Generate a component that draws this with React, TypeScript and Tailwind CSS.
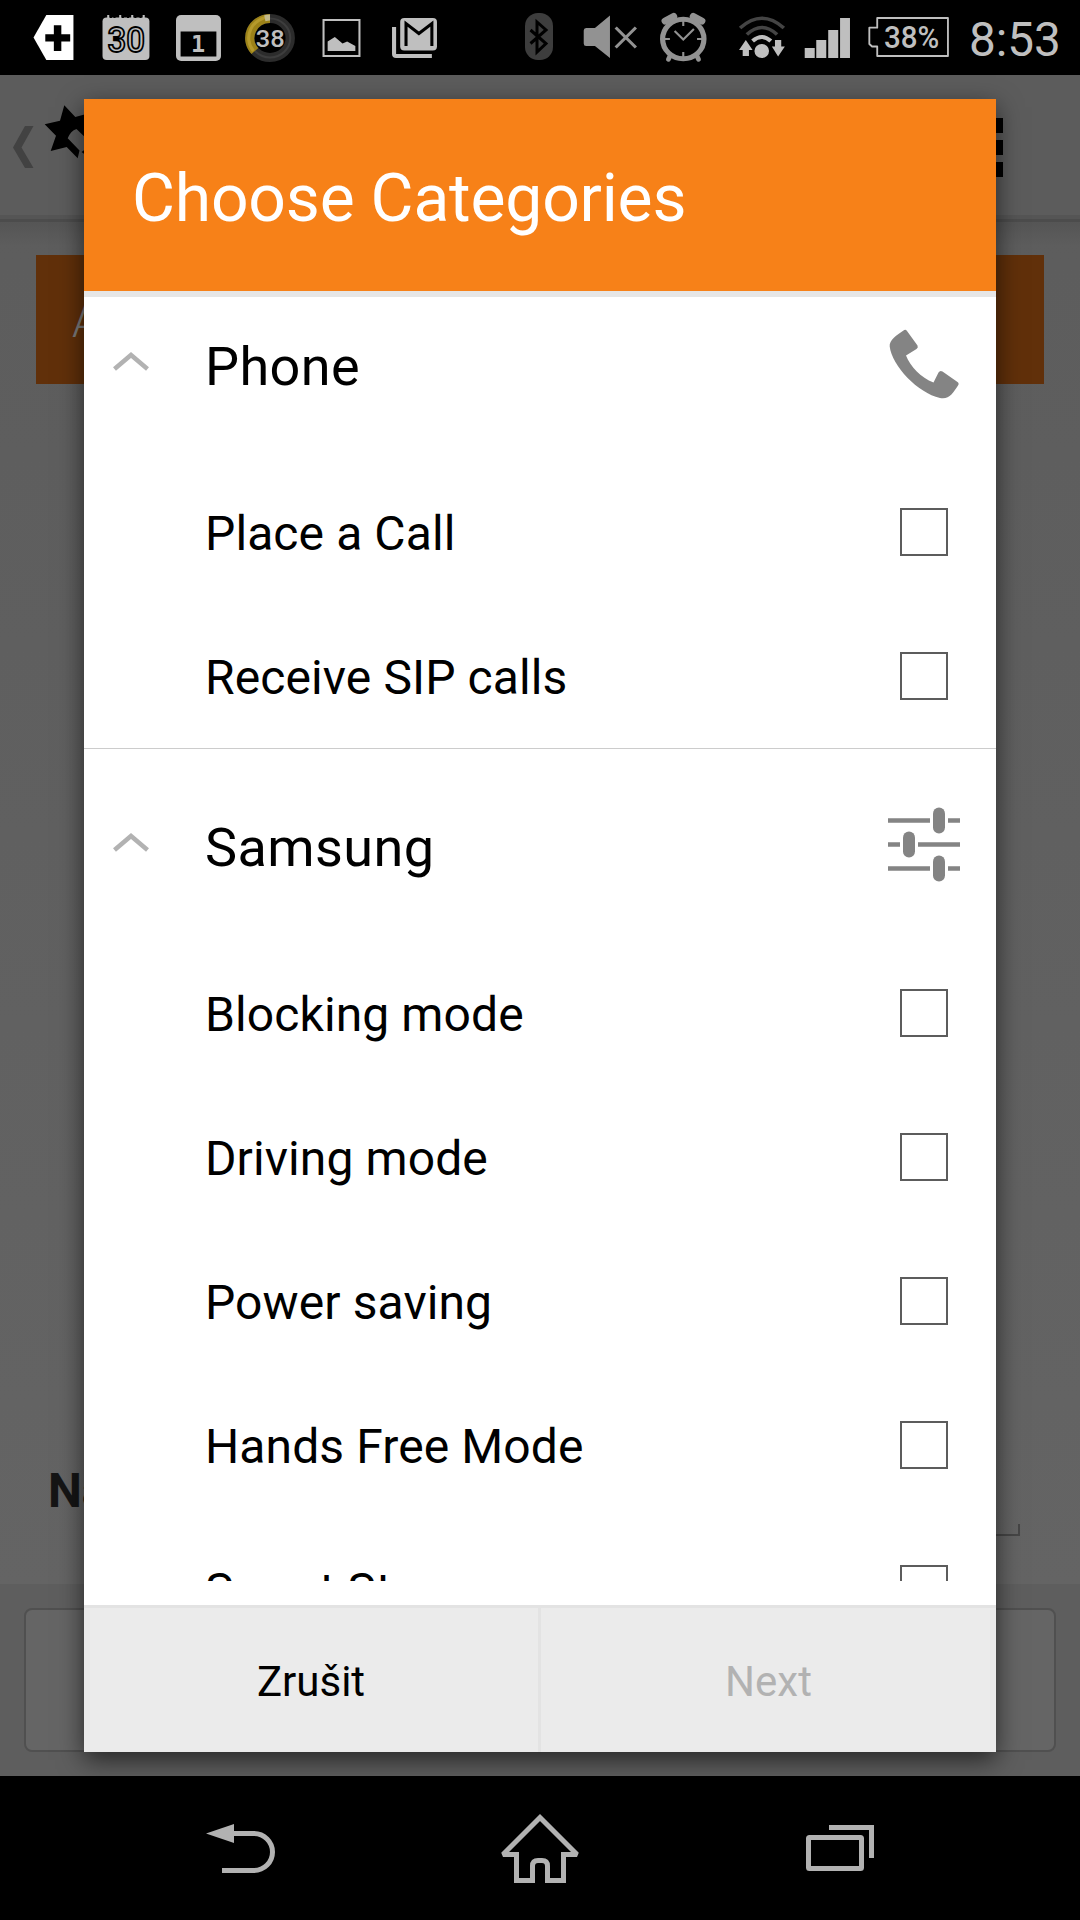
import { useState } from "react";

type Category = {
  title: string;
  icon: "phone" | "sliders";
  items: string[];
};

const categories: Category[] = [
  {
    title: "Phone",
    icon: "phone",
    items: ["Place a Call", "Receive SIP calls"],
  },
  {
    title: "Samsung",
    icon: "sliders",
    items: [
      "Blocking mode",
      "Driving mode",
      "Power saving",
      "Hands Free Mode",
      "Smart Stay",
    ],
  },
];

const StatusBar = () => (
  <div className="flex h-[75px] items-start bg-black">
    {/* notifications */}
    <svg className="ml-[33px] shrink-0" width="42" height="75" viewBox="32 0 41 75" preserveAspectRatio="none">
      <path d="M32.5 37.5L45 15H71.5V60H45Z" fill="#fff" />
      <path d="M44 37.8H68.3M56 25.3V51" stroke="#000" strokeWidth="7.3" />
    </svg>
    <svg className="ml-[27px] shrink-0" width="49" height="75" viewBox="99 0 47 75" preserveAspectRatio="none">
      <rect x="99.5" y="17.5" width="45" height="42.5" rx="4" fill="#bfbfbf" />
      <path
        d="M105 15V20M116.5 15V20M128 15V20M139 15V20"
        stroke="#bfbfbf"
        strokeWidth="2"
      />
      <path
        d="M107.5 14.5V18M111 14.5V18M119 14.5V18M124 14.5V18M131 14.5V18M136 14.5V18"
        stroke="#000"
        strokeWidth="2"
      />
      <text
        x="122.2"
        y="52"
        textAnchor="middle"
        textLength="36"
        lengthAdjust="spacingAndGlyphs"
        fontFamily="Roboto, sans-serif"
        fontSize="35"
        fontWeight="500"
        fill="#bfbfbf"
        stroke="#000"
        strokeWidth="1.8"
      >
        30
      </text>
    </svg>
    <svg className="ml-[25px] shrink-0" width="46" height="75" viewBox="170 0 45 75" preserveAspectRatio="none">
      <rect x="170" y="15" width="44" height="46" rx="5" fill="#bfbfbf" />
      <rect x="174.5" y="31.5" width="35" height="25" fill="#000" />
      <text
        x="191.5"
        y="52.5"
        textAnchor="middle"
        fontFamily="'DejaVu Sans Mono', monospace"
        fontSize="23"
        fontWeight="700"
        fill="#bfbfbf"
      >
        1
      </text>
    </svg>
    <svg className="ml-[21px] shrink-0" width="54" height="75" viewBox="235 0 52 75" preserveAspectRatio="none">
      <circle cx="261" cy="38" r="19.5" fill="none" stroke="#2c2c2c" strokeWidth="9" />
      <circle cx="261" cy="38" r="19.5" fill="none" stroke="#3d3d3d" strokeWidth="2" />
      <path d="M261 18.5A19.5 19.5 0 0 0 246.5 51" fill="none" stroke="#9c8218" strokeWidth="9" />
      <path d="M261 17A21 21 0 0 0 245 51" fill="none" stroke="#b59a2c" strokeWidth="3" />
      <path d="M256 18.2Q259 17.6 261 17.6" fill="none" stroke="#c2b98c" strokeWidth="6" />
      <text
        x="261.3"
        y="47.5"
        textAnchor="middle"
        fontFamily="Roboto, sans-serif"
        fontSize="24.5"
        fontWeight="500"
        fill="#bfbfbf"
      >
        38
      </text>
    </svg>
    <svg className="ml-[25px] shrink-0" width="39" height="75" viewBox="312 0 38 75" preserveAspectRatio="none">
      <rect x="313.5" y="20" width="35" height="36" fill="none" stroke="#bfbfbf" strokeWidth="2" />
      <path d="M317.5 51V41.5L324.5 37L332 43.5L336.5 41.5L344.5 46V51Z" fill="#bfbfbf" />
    </svg>
    <svg className="ml-[30px] shrink-0" width="47" height="75" viewBox="378 0 46 75" preserveAspectRatio="none">
      <rect x="387" y="18" width="36" height="32.5" rx="4" fill="#bfbfbf" />
      <path
        d="M392.7 46V23.5L405.3 33.5L418 23.5V46"
        fill="none"
        stroke="#000"
        strokeWidth="3"
      />
      <path d="M381 27V54Q381 56 383 56H418" fill="none" stroke="#bfbfbf" strokeWidth="4" />
    </svg>

    {/* system */}
    <svg className="ml-[84px] shrink-0" width="34" height="75" viewBox="522 0 34 75">
      <rect x="525" y="13" width="28" height="47" rx="13" fill="#3d3d3d" />
      <path
        d="M530.5 30L546 43.5L537 52V22L546 30L530.5 43.5"
        fill="none"
        stroke="#000"
        strokeWidth="3"
      />
    </svg>
    <svg className="ml-[27px] shrink-0" width="56" height="75" viewBox="582 0 54 75" preserveAspectRatio="none">
      <path d="M585 28H593.5L608 15.5V58L593.5 46H585Q582.7 46 582.7 43.5V30.5Q582.7 28 585 28Z" fill="#929292" />
      <path d="M613.5 27.5L633 47.5M633 27.5L613.5 47.5" stroke="#929292" strokeWidth="3" />
    </svg>
    <svg className="ml-[21px] shrink-0" width="48" height="75" viewBox="656 0 46 75" preserveAspectRatio="none">
      <g stroke="#929292" fill="none">
        <circle cx="678.3" cy="39" r="19.8" strokeWidth="5" />
        <path d="M661 21L669 16.5M696 21L688 16.5" strokeWidth="7" strokeLinecap="round" />
        <path d="M666 55L664 59.5M691 55L693 59.5" strokeWidth="4.5" strokeLinecap="round" />
        <path d="M670 31L678.3 39.5L688.5 29" strokeWidth="2" />
        <path
          d="M678.3 21V26M678.3 52V57M660 39H665.5M691.5 39H697"
          strokeWidth="2"
        />
      </g>
    </svg>
    <svg className="ml-[30px] shrink-0" width="50" height="75" viewBox="732 0 48 75" preserveAspectRatio="none">
      <path
        d="M734 28Q755 8.5 776 28M740.5 34.5Q755 20.5 769.5 34.5"
        fill="none"
        stroke="#444"
        strokeWidth="3.5"
      />
      <path d="M746 41Q755 33 763.5 41" fill="none" stroke="#bfbfbf" strokeWidth="4" />
      <circle cx="754.8" cy="51" r="7" fill="#bfbfbf" />
      <path d="M739.5 40L746 50H742.5V56H736.5V50H733Z" fill="#bfbfbf" />
      <path d="M770.5 56.5L777 46.5H773.5V40H767.5V46.5H764.5Z" fill="#bfbfbf" />
    </svg>
    <svg className="ml-4 shrink-0" width="47" height="75" viewBox="795 0 46 75" preserveAspectRatio="none">
      <path
        d="M795.7 48H805.5V58H795.7ZM807 40H816.8V58H807ZM818.7 30H828.5V58H818.7ZM830.3 18H840V58H830.3Z"
        fill="#bfbfbf"
      />
    </svg>
    <svg className="ml-[17px] shrink-0" width="82" height="75" viewBox="857 0 80 75" preserveAspectRatio="none">
      <path
        d="M866 18H935V56H866V46.5H861L858.3 44V27.7H866Z"
        fill="none"
        stroke="#bfbfbf"
        strokeWidth="1.8"
        strokeLinejoin="round"
      />
      <text
        x="872.5"
        y="48"
        textLength="54"
        lengthAdjust="spacingAndGlyphs"
        fontFamily="Roboto, sans-serif"
        fontSize="31"
        fontWeight="500"
        fill="#bfbfbf"
      >
        38%
      </text>
    </svg>
    <svg className="ml-[19px] shrink-0" width="95" height="75" viewBox="955 0 92 75" preserveAspectRatio="none">
      <text
        x="955"
        y="56"
        textLength="89"
        lengthAdjust="spacingAndGlyphs"
        fontFamily="Roboto, sans-serif"
        fontSize="48"
        fill="#bfbfbf"
      >
        8:53
      </text>
    </svg>
  </div>
);

// The form that stays dimmed behind the dialog
const DimmedScreen = () => (
  <div className="flex h-full flex-col bg-linear-to-b from-[#5c5c5c] to-[#656565]">
    <div className="flex h-[140px] shrink-0 items-start justify-between bg-[#5c5c5c] pr-[77px] pl-3">
      <div className="flex">
        <svg width="24" height="140" viewBox="12 75 24 140">
          <path d="M25 126H33.5L21.5 147.5L33.5 168H25L13 147.5Z" fill="#424242" />
        </svg>
        <svg className="ml-2" width="50" height="140" viewBox="44 75 50 140">
          <path
            d="M64.3 105.3L75.3 117L90 113V142L76.5 129Q70.5 131 67.7 138.3L79.5 150.5L77.7 158.3L66.7 147L50.7 151L56 135.7L44.7 124.3L60 120.7Z"
            fill="#000"
          />
          <path d="M81.5 152L90 146V158Z" fill="#000" />
        </svg>
      </div>
      <div className="flex flex-col gap-[7px] pt-[43px]">
        <span className="size-[15px] bg-black" />
        <span className="size-[15px] bg-black" />
        <span className="size-[15px] bg-black" />
      </div>
    </div>
    <div className="h-1 shrink-0 bg-[#555555]" />
    <div className="h-[3px] shrink-0 bg-[#4c4c4c]" />
    <div className="h-6 shrink-0 bg-linear-to-b from-[#555555] to-[#5d5d5d]" />

    <div className="mx-9 mt-[9px] flex h-[129px] shrink-0 items-center bg-[#61300a] pt-1 pl-9 font-light text-[#7c7c7c]">
      <span className="text-[44px]">A</span>
    </div>

    <div className="mx-12 mt-auto flex h-[120px] items-start justify-between">
      <span className="text-[48px] leading-[54px] font-bold text-[#151515]">
        Name
      </span>
      <div className="mt-[60px] mr-3 h-3 w-[600px] border-r-2 border-b-2 border-[#464646]" />
    </div>

    <div className="h-48 shrink-0 bg-[#5e5e5e] px-6 py-6">
      <div className="h-36 rounded-lg border-2 border-[#505050] bg-[#656565]" />
    </div>
  </div>
);

const Chevron = () => (
  <svg width="36" height="20" viewBox="0 0 36 20" className="mb-[5px] shrink-0">
    <path d="M1.5 17L18 3L34.5 17" fill="none" stroke="#b2b2b2" strokeWidth="4.5" />
  </svg>
);

const PhoneIcon = () => (
  <svg width="72" height="72" viewBox="0 0 72 72">
    <path
      d="M15.5 2.5Q17.5 0.8 19 3L29.5 17.5Q30.5 19.5 28.5 21L18 27.5C22 38 33 50 45.5 54.5L50.5 44.5Q52 42 54.5 43.5L69.5 54Q71.5 55.5 70 57.5C65 65 61 72 52 70C30 65 4 38 1.7 18.5C1 12 9 7 15.5 2.5Z"
      fill="#848484"
    />
  </svg>
);

const SlidersIcon = () => (
  <svg width="72" height="75" viewBox="0 0 72 75" className="mb-[2px]">
    <path
      d="M0 13.5H42M60 13.5H72M0 37.5H12M30 37.5H72M0 61.5H42M60 61.5H72"
      stroke="#848484"
      strokeWidth="4.5"
    />
    <rect x="45" y="0.5" width="12" height="26" rx="6" fill="#848484" />
    <rect x="15" y="24.5" width="12" height="26" rx="6" fill="#848484" />
    <rect x="45" y="48.5" width="12" height="26" rx="6" fill="#848484" />
  </svg>
);

const CategoryGroup = ({
  category,
  selected,
  onToggle,
}: {
  category: Category;
  selected: string[];
  onToggle: (item: string) => void;
}) => (
  <section>
    <div className="flex h-48 items-center pr-9 pl-[29px]">
      <Chevron />
      <h2 className="ml-14 flex-1 pt-1.5 text-[54px] leading-[64px] tracking-[0.4px]">
        {category.title}
      </h2>
      {category.icon === "phone" ? <PhoneIcon /> : <SlidersIcon />}
    </div>
    {category.items.map((item) => (
      <label
        key={item}
        className="flex h-36 items-center justify-between pr-12 pl-[121px]"
      >
        <span className="pt-[3px] text-[48px] leading-[56px] tracking-[0.1px]">
          {item}
        </span>
        <input
          type="checkbox"
          checked={selected.includes(item)}
          onChange={() => onToggle(item)}
          className="size-12 appearance-none border-2 border-[#5c5c5c] checked:bg-[#f78118]"
        />
      </label>
    ))}
  </section>
);

const CategoryDialog = () => {
  const [selected, setSelected] = useState<string[]>([]);

  const handleToggle = (item: string) => {
    setSelected((prev) =>
      prev.includes(item) ? prev.filter((i) => i !== item) : [...prev, item],
    );
  };

  return (
    <div
      role="dialog"
      className="absolute inset-x-[84px] top-6 flex h-[1653px] flex-col bg-white shadow-[0_8px_24px_rgba(0,0,0,0.6)]"
    >
      <h1 className="flex h-48 shrink-0 items-center bg-[#f78118] pt-1.5 pl-12 text-[66px] tracking-[-0.2px] text-white">
        Choose Categories
      </h1>
      <div className="h-1.5 shrink-0 bg-[#e6e6e6]" />

      <div className="mb-6 min-h-0 flex-1 overflow-hidden">
        <div className="-mt-[29px] divide-y divide-[#cccccc]">
          {categories.map((category) => (
            <CategoryGroup
              key={category.title}
              category={category}
              selected={selected}
              onToggle={handleToggle}
            />
          ))}
        </div>
      </div>

      <div className="flex h-[147px] shrink-0 border-t-3 border-[#e3e3e3] bg-[#ebebeb] text-[42px]">
        <button className="w-[457px] border-r-3 border-[#e3e3e3] pt-0.5">
          Zrušit
        </button>
        <button
          className="flex-1 pt-0.5 disabled:text-[#b2b2b2]"
          disabled={selected.length === 0}
        >
          Next
        </button>
      </div>
    </div>
  );
};

const NavigationBar = () => (
  <div className="flex h-36 items-start justify-center gap-[220px] bg-black">
    <svg width="80" height="144" viewBox="200 1776 80 144">
      <path d="M206 1833.5L234 1824V1843Z" fill="#b2b2b2" />
      <path
        d="M232 1833.5H254A18.5 18.5 0 0 1 254 1870.5H222"
        fill="none"
        stroke="#b2b2b2"
        strokeWidth="5"
      />
    </svg>
    <svg width="80" height="144" viewBox="500 1776 80 144">
      <path
        d="M540 1817.5L503 1854.5H516.5V1880.5H532.5V1866Q532.5 1860.5 538 1860.5H542Q547.5 1860.5 547.5 1866V1880.5H563.5V1854.5H577Z"
        fill="none"
        stroke="#b2b2b2"
        strokeWidth="5"
        strokeLinejoin="miter"
        strokeMiterlimit="2"
      />
    </svg>
    <svg width="80" height="144" viewBox="800 1776 80 144">
      <rect x="808.5" y="1837.5" width="53" height="31" rx="1" fill="none" stroke="#b2b2b2" strokeWidth="5" />
      <path d="M829 1827.5H871.5V1858" fill="none" stroke="#b2b2b2" strokeWidth="5" />
    </svg>
  </div>
);

const App = () => (
  <main className="h-[1920px] w-[1080px] overflow-hidden bg-black font-[Roboto,sans-serif] text-black">
    <StatusBar />
    <div className="relative h-[1701px] overflow-hidden">
      <DimmedScreen />
      <CategoryDialog />
    </div>
    <NavigationBar />
  </main>
);

export default App;
